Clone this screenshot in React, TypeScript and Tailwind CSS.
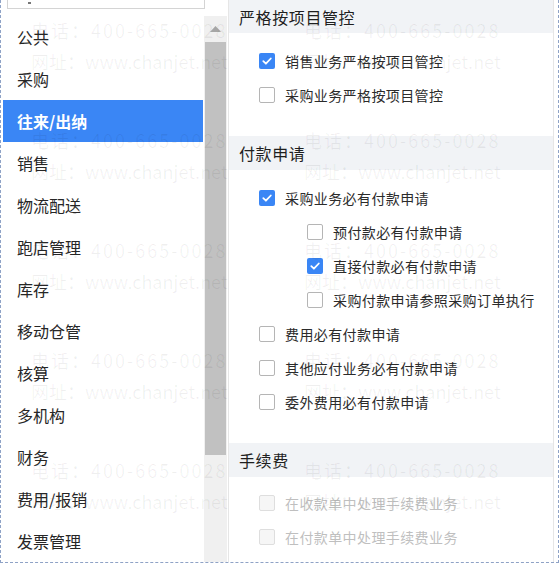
import React from "react";

const FONT = { fontFamily: '"Noto Sans CJK SC", "Noto Sans", sans-serif' };

type Item = { label: string; checked?: boolean; level?: 1 | 2; disabled?: boolean };

const navItems = [
  "公共",
  "采购",
  "往来/出纳",
  "销售",
  "物流配送",
  "跑店管理",
  "库存",
  "移动仓管",
  "核算",
  "多机构",
  "财务",
  "费用/报销",
  "发票管理",
];

const sections: { title: string; items: Item[] }[] = [
  {
    title: "严格按项目管控",
    items: [
      { label: "销售业务严格按项目管控", checked: true },
      { label: "采购业务严格按项目管控" },
    ],
  },
  {
    title: "付款申请",
    items: [
      { label: "采购业务必有付款申请", checked: true },
      { label: "预付款必有付款申请", level: 2 },
      { label: "直接付款必有付款申请", level: 2, checked: true },
      { label: "采购付款申请参照采购订单执行", level: 2 },
      { label: "费用必有付款申请" },
      { label: "其他应付业务必有付款申请" },
      { label: "委外费用必有付款申请" },
    ],
  },
  {
    title: "手续费",
    items: [
      { label: "在收款单中处理手续费业务", disabled: true },
      { label: "在付款单中处理手续费业务", disabled: true },
    ],
  },
];

function Checkbox({ checked, disabled }: { checked?: boolean; disabled?: boolean }) {
  if (checked) {
    return (
      <span className="flex h-4 w-4 shrink-0 items-center justify-center rounded-[2px] bg-[#3a86f5]">
        <svg width="12" height="12" viewBox="0 0 12 12" fill="none">
          <path d="M2.3 6.2 L4.9 8.7 L9.8 3.5" stroke="white" strokeWidth="1.8" strokeLinecap="round" strokeLinejoin="round" />
        </svg>
      </span>
    );
  }
  if (disabled) {
    return <span className="h-4 w-4 shrink-0 rounded-[2px] border border-[#dedede] bg-[#f6f6f6]" />;
  }
  return <span className="h-4 w-4 shrink-0 rounded-[2px] border border-[#b5b5b5] bg-white" />;
}

function Watermark() {
  const rows = [0, 110, 220, 330, 440];
  const cols = [30, 303];
  return (
    <div className="pointer-events-none absolute inset-0">
      {rows.map((r) =>
        cols.map((c) => (
          <React.Fragment key={`${r}-${c}`}>
            <div
              className="absolute whitespace-nowrap text-[18px] leading-[26px] tracking-[2px] text-[rgba(0,0,0,0.06)]"
              style={{ left: c, top: 17 + r }}
            >
              电话：400-665-0028
            </div>
            <div
              className="absolute whitespace-nowrap text-[18px] leading-[26px] tracking-[0px] text-[rgba(0,0,0,0.06)]"
              style={{ left: c, top: 48 + r }}
            >
              网址：www.chanjet.net
            </div>
          </React.Fragment>
        ))
      )}
    </div>
  );
}

export default function App() {
  return (
    <div
      className="relative h-[563px] w-[559px] overflow-hidden border-b border-l border-r border-dashed border-[#8ea2c6] bg-white"
      style={FONT}
    >
      <div className="flex h-full">
        {/* left nav */}
        <div className="flex w-[202px] shrink-0 flex-col pl-[2px]">
          <div className="relative ml-[4px] h-[9px] w-[198px] shrink-0 border-b border-l border-r border-[#d4d4d4]">
            <span className="absolute left-[20px] top-[2px] h-[2px] w-[3px] bg-[#777]" />
          </div>
          <div className="h-[7px] shrink-0" />
          {navItems.map((n) => {
            const sel = n === "往来/出纳";
            return (
              <div
                key={n}
                className={`flex h-[42px] shrink-0 items-center pl-[14px] text-[16px] ${
                  sel ? "bg-[#3a86f5] font-bold text-white" : "text-[#262626]"
                }`}
              >
                {n}
              </div>
            );
          })}
        </div>
        {/* scrollbar */}
        <div className="ml-[1px] mt-[16px] flex w-[23px] shrink-0 flex-col bg-[#f0f0f0] pl-[1px] pr-[1px]">
          <div className="flex h-[26px] items-center justify-center">
            <svg width="11" height="6" viewBox="0 0 11 6">
              <path d="M0 6 L5.5 0 L11 6 Z" fill="#a6a6a6" />
            </svg>
          </div>
          <div className="h-[413px] bg-[#c1c1c1]" />
        </div>
        <div className="ml-[1px] w-px shrink-0 bg-[#e6e6e6]" />
        {/* right panel */}
        <div className="flex w-[324px] shrink-0 flex-col">
          {sections.map((s, i) => (
            <div key={s.title} className="flex flex-col">
              <div
                className={`flex items-center bg-[#f1f3f6] pl-[10px] text-[16px] tracking-[0.6px] text-[#1f1f1f] ${
                  i === 0 ? "h-[33px]" : "h-[34px]"
                }`}
              >
                {s.title}
              </div>
              <div
                className={`flex flex-col ${i < sections.length - 1 ? "pb-[24px] pt-[11px]" : "pt-[9px]"}`}
              >
                {s.items.map((it) => (
                  <div
                    key={it.label}
                    className={`flex h-[34px] items-center gap-[10px] text-[14px] tracking-[0.4px] ${
                      it.level === 2 ? "pl-[78px]" : "pl-[30px]"
                    } ${it.disabled ? "text-[#bfbfbf]" : "text-[#2b2b2b]"}`}
                  >
                    <Checkbox checked={it.checked} disabled={it.disabled} />
                    <span>{it.label}</span>
                  </div>
                ))}
              </div>
            </div>
          ))}
        </div>
        <div className="w-px shrink-0 bg-[#e6e6e6]" />
      </div>
      <Watermark />
    </div>
  );
}
